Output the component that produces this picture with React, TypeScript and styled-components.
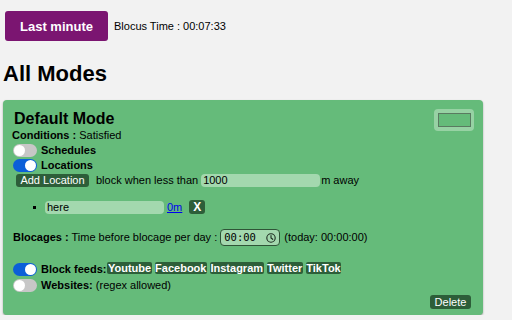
import React from "react";
import styled, { createGlobalStyle } from "styled-components";

const Global = createGlobalStyle`
  html, body { margin: 0; padding: 0; background: #f2f2f2; }
  body { font-family: "Liberation Sans", Arial, sans-serif; color: #000; }
`;

const Page = styled.div`
  padding: 11px 0 0 3px;
  width: 480px;
`;

const TopBar = styled.div`
  display: flex;
  align-items: center;
  gap: 6px;
  margin-left: 2px;
`;

const PurpleButton = styled.button`
  width: 103px;
  height: 30px;
  border: none;
  border-radius: 3px;
  background: #7b1571;
  color: #fff;
  font-family: inherit;
  font-weight: bold;
  font-size: 13px;
  padding: 0;
`;

const Timer = styled.span`
  font-size: 11px;
`;

const Heading = styled.h1`
  font-size: 22px;
  line-height: 25px;
  margin: 20px 0 14px 0;
  font-weight: bold;
`;

const Card = styled.div`
  background: #65bb7a;
  border-radius: 4px;
  box-shadow: 0 1px 2px rgba(0, 0, 0, 0.35);
  padding: 10px 12px 6px 9px;
  font-size: 11px;
  line-height: 13px;
`;

const ColorSwatch = styled.div`
  float: right;
  width: 40px;
  height: 22px;
  margin: -1px -3px 0 0;
  border-radius: 4px;
  background: #97d2a4;
  display: flex;
  align-items: center;
  justify-content: center;
`;

const SwatchInner = styled.div`
  width: 31px;
  height: 12px;
  border: 1px solid #5a7a61;
  background: #65bb7a;
`;

const Title = styled.div`
  font-size: 16px;
  line-height: 18px;
  font-weight: bold;
  margin-left: 2px;
`;

const Line = styled.div`
  margin-top: 1px;
`;

const Bold = styled.b`
  font-weight: bold;
`;

const ToggleRow = styled.div<{ $mt?: number }>`
  display: flex;
  align-items: center;
  height: 15px;
  margin-top: ${(p) => p.$mt ?? 0}px;
  gap: 4px;
  padding-left: 1px;
`;

const Track = styled.span<{ $on: boolean }>`
  position: relative;
  display: inline-block;
  width: 24px;
  height: 13px;
  border-radius: 7px;
  background: ${(p) => (p.$on ? "#0b5fd8" : "#c7c7c7")};
  flex: none;
`;

const Knob = styled.span<{ $on: boolean }>`
  position: absolute;
  top: 1px;
  left: ${(p) => (p.$on ? "12px" : "1px")};
  width: 11px;
  height: 11px;
  border-radius: 50%;
  background: #fff;
`;

const Toggle = ({ on }: { on: boolean }) => (
  <Track $on={on}>
    <Knob $on={on} />
  </Track>
);

const Row = styled.div`
  display: flex;
  align-items: center;
  height: 15px;
`;

const DarkButton = styled.button`
  border: none;
  border-radius: 3px;
  background: #2d5e39;
  color: #fff;
  font-family: inherit;
  font-size: 11px;
  line-height: 13px;
  height: 13px;
  padding: 0 4px;
`;

const AddButton = styled(DarkButton)`
  margin-left: 4px;
  width: 73px;
`;

const Spaced = styled.span<{ $ml?: number }>`
  margin-left: ${(p) => p.$ml ?? 0}px;
  white-space: pre;
`;

const TextField = styled.div<{ $ml?: number }>`
  width: 117px;
  height: 13px;
  padding-left: 2px;
  border-radius: 4px;
  background: #a3d8ae;
  margin-left: ${(p) => p.$ml ?? 0}px;
  font-size: 11px;
  line-height: 13px;
`;

const List = styled.ul`
  margin: 11px 0 13px 0;
  padding-left: 21px;
`;

const Item = styled.li`
  display: flex;
  align-items: center;
  height: 16px;
  &::before {
    content: "";
    width: 3px;
    height: 3px;
    background: #000;
    margin-right: 9px;
  }
`;

const Link = styled.a`
  color: #0000ee;
  text-decoration: underline;
  margin-left: 3px;
`;

const XButton = styled(DarkButton)`
  width: 16px;
  height: 14px;
  padding: 0;
  margin-left: 7px;
  font-weight: bold;
  font-size: 12px;
`;

const TimeRow = styled.div`
  display: flex;
  align-items: center;
  height: 19px;
  padding-left: 1px;
`;

const TimeBox = styled.div`
  display: flex;
  align-items: center;
  justify-content: space-between;
  box-sizing: border-box;
  width: 60px;
  height: 17px;
  border: 1px solid #2f5437;
  border-radius: 4px;
  background: #a3d8ae;
  padding: 0 3px 0 3px;
  font-family: "DejaVu Sans Mono", monospace;
  font-size: 10.5px;
`;

const FeedRow = styled.div`
  display: flex;
  align-items: center;
  height: 15px;
  margin-top: 15px;
  padding-left: 1px;
`;

const Feeds = styled.div`
  align-self: flex-start;
  display: flex;
  gap: 3px;
  margin-left: 1px;
`;

const FeedButton = styled.button`
  border: none;
  border-radius: 2px;
  background: #2d5e39;
  color: #fff;
  font-family: inherit;
  font-weight: bold;
  font-size: 11px;
  line-height: 12px;
  height: 12px;
  padding: 0 0.5px;
`;

const Footer = styled.div`
  display: flex;
  justify-content: flex-end;
  margin-top: 2px;
`;

const DeleteButton = styled(DarkButton)`
  height: 14px;
  line-height: 14px;
  width: 41px;
`;

const Clock = () => (
  <svg width="10" height="10" viewBox="0 0 10 10" fill="none" stroke="#1c2a1f" strokeWidth="1.1">
    <circle cx="5" cy="5" r="4.2" />
    <path d="M5 2.6V5l1.7 1.3" strokeLinecap="round" />
  </svg>
);

export default function App() {
  return (
    <>
      <Global />
      <Page>
        <TopBar>
          <PurpleButton>Last minute</PurpleButton>
          <Timer>Blocus Time : 00:07:33</Timer>
        </TopBar>
        <Heading>All Modes</Heading>
        <Card>
          <ColorSwatch>
            <SwatchInner />
          </ColorSwatch>
          <Title>Default Mode</Title>
          <Line>
            <Bold>Conditions : </Bold>Satisfied
          </Line>
          <ToggleRow $mt={1}>
            <Toggle on={false} />
            <Bold>Schedules</Bold>
          </ToggleRow>
          <ToggleRow>
            <Toggle on={true} />
            <Bold>Locations</Bold>
          </ToggleRow>
          <Row>
            <AddButton>Add Location</AddButton>
            <Spaced $ml={7}>block when less than</Spaced>
            <TextField $ml={3}>1000</TextField>
            <Spaced $ml={1}>m away</Spaced>
          </Row>
          <List>
            <Item>
              <TextField>here</TextField>
              <Link href="#">0m</Link>
              <XButton>X</XButton>
            </Item>
          </List>
          <TimeRow>
            <Bold>Blocages :</Bold>
            <Spaced> Time before blocage per day : </Spaced>
            <TimeBox>
              <span>00:00</span>
              <Clock />
            </TimeBox>
            <Spaced $ml={4}>(today: 00:00:00)</Spaced>
          </TimeRow>
          <FeedRow>
            <Toggle on={true} />
            <Bold style={{ marginLeft: 4 }}>Block feeds:</Bold>
            <Feeds>
              <FeedButton>Youtube</FeedButton>
              <FeedButton>Facebook</FeedButton>
              <FeedButton>Instagram</FeedButton>
              <FeedButton>Twitter</FeedButton>
              <FeedButton>TikTok</FeedButton>
            </Feeds>
          </FeedRow>
          <ToggleRow $mt={1}>
            <Toggle on={false} />
            <span>
              <Bold>Websites:</Bold> (regex allowed)
            </span>
          </ToggleRow>
          <Footer>
            <DeleteButton>Delete</DeleteButton>
          </Footer>
        </Card>
      </Page>
    </>
  );
}
